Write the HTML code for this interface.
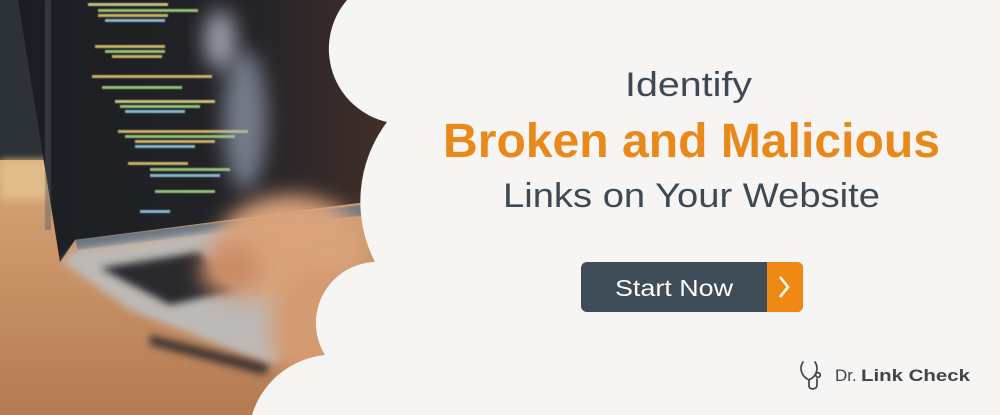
<!DOCTYPE html>
<html><head><meta charset="utf-8"><style>
html,body{margin:0;padding:0;background:#f6f5f4;}
svg{display:block}
</style></head><body>
<svg width="1000" height="415" viewBox="0 0 1000 415" xmlns="http://www.w3.org/2000/svg">
<defs>
<filter id="b4" x="-20%" y="-20%" width="140%" height="140%"><feGaussianBlur stdDeviation="4"/></filter>
<filter id="b10" x="-50%" y="-50%" width="200%" height="200%"><feGaussianBlur stdDeviation="10"/></filter>
<filter id="b1"><feGaussianBlur stdDeviation="0.5"/></filter>
<linearGradient id="scr" x1="0" y1="0" x2="1" y2="0">
<stop offset="0" stop-color="#1a1e22"/><stop offset="0.6" stop-color="#252428"/><stop offset="1" stop-color="#4a3129"/></linearGradient>
<linearGradient id="tab" x1="0" y1="0" x2="0" y2="1">
<stop offset="0" stop-color="#d6a676"/><stop offset="1" stop-color="#b57a52"/></linearGradient>
</defs>
<rect x="0" y="0" width="420" height="415" fill="#3a2c27"/>
<rect x="0" y="0" width="60" height="170" fill="#2c3236"/>
<rect x="0" y="160" width="420" height="255" fill="url(#tab)"/>
<rect x="0" y="160" width="60" height="40" fill="#e2bb8a" filter="url(#b4)"/>
<polygon points="18,0 420,0 420,195 75,240 60,262" fill="url(#scr)"/>
<polygon points="75,240 360,205 365,215 78,250" fill="#6a7680" filter="url(#b1)"/>
<g opacity="0.9" filter="url(#b1)">
<rect x="88" y="3" width="80" height="3" fill="#d8d28a"/><rect x="98" y="9" width="100" height="3" fill="#9fd27a"/><rect x="98" y="14" width="70" height="3" fill="#d8c070"/><rect x="105" y="19" width="60" height="3" fill="#8fc7e0"/>
<rect x="95" y="45" width="70" height="3" fill="#d8c070"/><rect x="105" y="50" width="60" height="3" fill="#9fd27a"/><rect x="112" y="55" width="50" height="3" fill="#d8c070"/>
<rect x="92" y="75" width="120" height="3" fill="#d8c070"/><rect x="102" y="86" width="80" height="3" fill="#9fd27a"/>
<rect x="115" y="100" width="100" height="3" fill="#d8d28a"/><rect x="120" y="105" width="80" height="3" fill="#9fd27a"/><rect x="125" y="110" width="60" height="3" fill="#8fc7e0"/>
<rect x="118" y="130" width="130" height="3" fill="#d8c070"/><rect x="125" y="135" width="110" height="3" fill="#9fd27a"/><rect x="135" y="140" width="80" height="3" fill="#d8c070"/><rect x="135" y="145" width="60" height="3" fill="#8fc7e0"/>
<rect x="128" y="162" width="60" height="3" fill="#d8c070"/><rect x="150" y="168" width="80" height="3" fill="#9fd27a"/><rect x="150" y="174" width="70" height="3" fill="#8fc7e0"/>
<rect x="155" y="190" width="60" height="3" fill="#9fd27a"/><rect x="140" y="210" width="30" height="3" fill="#8fc7e0"/>
<rect x="45" y="0" width="6" height="230" fill="#555a60" opacity="0.5"/>
</g>
<ellipse cx="220" cy="40" rx="16" ry="30" fill="#c8d0e0" opacity="0.7" filter="url(#b10)"/>
<ellipse cx="245" cy="120" rx="22" ry="70" fill="#aab6cc" opacity="0.6" filter="url(#b10)"/>
<polygon points="62,262 75,250 330,215 345,330 270,365 130,310" fill="#bdb9b6" filter="url(#b4)"/>
<polygon points="100,268 200,252 235,290 170,305" fill="#2a2a2e" filter="url(#b4)"/>
<polygon points="150,335 270,365 265,375 150,345" fill="#3a3230" filter="url(#b4)"/>
<ellipse cx="290" cy="250" rx="75" ry="55" fill="#d9a27a" filter="url(#b10)"/>
<ellipse cx="230" cy="270" rx="30" ry="25" fill="#c98c66" filter="url(#b10)"/>
<ellipse cx="330" cy="330" rx="60" ry="60" fill="#d49a70" filter="url(#b10)"/>
<path d="M347,0 A75,75 0 0 0 387,122 A132,132 0 0 0 375,262 A61,61 0 0 0 325,355 A85,85 0 0 0 252,415 L1000,415 L1000,0 Z" fill="#f6f5f4"/>
<g font-family="'Liberation Sans',sans-serif">
<text x="625" y="96" font-size="34" fill="#3d4a55" textLength="127" lengthAdjust="spacingAndGlyphs">Identify</text>
<text x="443" y="157" font-size="48" font-weight="bold" fill="#e9891a" textLength="497" lengthAdjust="spacingAndGlyphs">Broken and Malicious</text>
<text x="503" y="207" font-size="34" fill="#3d4a55" textLength="377" lengthAdjust="spacingAndGlyphs">Links on Your Website</text>
</g>
<rect x="581" y="262" width="222" height="50" rx="6" fill="#3e4d58"/>
<path d="M767,262 H797 A6,6 0 0 1 803,268 V306 A6,6 0 0 1 797,312 H767 Z" fill="#ee8a14"/>
<text x="615" y="296" font-family="'Liberation Sans',sans-serif" font-size="23" fill="#ffffff" textLength="118" lengthAdjust="spacingAndGlyphs">Start Now</text>
<path d="M780,277 L788,287 L780,297" fill="none" stroke="#fff" stroke-width="2.5"/>
<g fill="none" stroke="#444" stroke-width="1.7" stroke-linecap="round">
<path d="M803,362 C799,368 801,376 809,380 C817,376 819,368 815,362"/>
<path d="M809,380 V386 C809,390 817,390 817,385 V379"/>
<circle cx="818" cy="375" r="2.3"/>
</g>
<text x="835" y="381" font-family="'Liberation Sans',sans-serif" font-size="17" fill="#444">Dr.</text>
<text x="861" y="381" font-family="'Liberation Sans',sans-serif" font-size="17" font-weight="bold" fill="#444" textLength="109" lengthAdjust="spacingAndGlyphs">Link Check</text>
</svg>
</body></html>
